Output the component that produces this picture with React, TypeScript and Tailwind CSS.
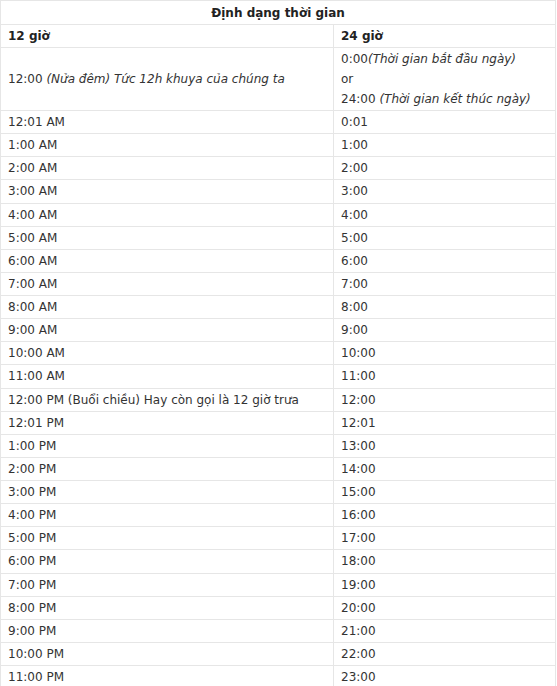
import React from "react";

// Bảng quy đổi 12 giờ / 24 giờ
const rows: [string, string][] = [
  ["12:01 AM", "0:01"],
  ["1:00 AM", "1:00"],
  ["2:00 AM", "2:00"],
  ["3:00 AM", "3:00"],
  ["4:00 AM", "4:00"],
  ["5:00 AM", "5:00"],
  ["6:00 AM", "6:00"],
  ["7:00 AM", "7:00"],
  ["8:00 AM", "8:00"],
  ["9:00 AM", "9:00"],
  ["10:00 AM", "10:00"],
  ["11:00 AM", "11:00"],
  ["12:00 PM (Buổi chiều) Hay còn gọi là 12 giờ trưa", "12:00"],
  ["12:01 PM", "12:01"],
  ["1:00 PM", "13:00"],
  ["2:00 PM", "14:00"],
  ["3:00 PM", "15:00"],
  ["4:00 PM", "16:00"],
  ["5:00 PM", "17:00"],
  ["6:00 PM", "18:00"],
  ["7:00 PM", "19:00"],
  ["8:00 PM", "20:00"],
  ["9:00 PM", "21:00"],
  ["10:00 PM", "22:00"],
  ["11:00 PM", "23:00"],
];

const base = "border border-[#e6e6e6] px-[7px] py-px align-middle";
const cell = `${base} leading-[20.125px]`;
const tall = `${base} leading-[20px]`;

export default function App() {
  return (
    <div className="w-[557px] bg-white font-['DejaVu_Sans',Verdana,sans-serif] text-[12px] text-[#333]">
      <table className="w-[556px] table-fixed border-collapse">
        <colgroup>
          <col className="w-[333px]" />
          <col />
        </colgroup>
        <tbody>
          <tr>
            <td colSpan={2} className={`${tall} pt-[2px] pb-px text-center font-bold text-[#222]`}>
              Định dạng thời gian
            </td>
          </tr>
          <tr>
            <td className={`${tall} font-bold text-[#222]`}>12 giờ</td>
            <td className={`${tall} font-bold text-[#222]`}>24 giờ</td>
          </tr>
          <tr>
            <td className={tall}>
              12:00 <em>(Nửa đêm) Tức 12h khuya của chúng ta</em>
            </td>
            <td className={tall}>
              0:00<em>(Thời gian bắt đầu ngày)</em>
              <br />
              or
              <br />
              24:00 <em>(Thời gian kết thúc ngày)</em>
            </td>
          </tr>
          {rows.map(([a, b]) => (
            <tr key={a}>
              <td className={cell}>{a}</td>
              <td className={cell}>{b}</td>
            </tr>
          ))}
        </tbody>
      </table>
    </div>
  );
}
